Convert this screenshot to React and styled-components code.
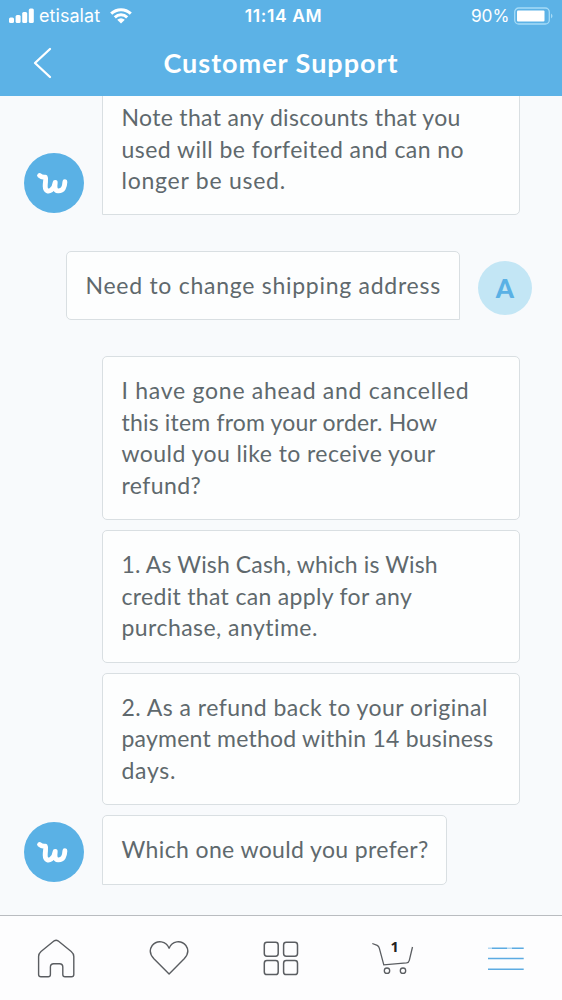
import React from "react";
import styled, { createGlobalStyle } from "styled-components";

const Global = createGlobalStyle`
  * { box-sizing: border-box; }
  body { margin: 0; background: #f8fafc; }
`;

const Screen = styled.div`
  width: 562px;
  height: 1000px;
  display: flex;
  flex-direction: column;
  overflow: hidden;
  background: #f8fafc;
  font-family: Lato, "Open Sans", sans-serif;
`;

const Header = styled.header`
  flex: none;
  height: 96px;
  background: #5cb2e6;
  color: #fff;
`;

const StatusBar = styled.div`
  height: 31px;
  display: grid;
  grid-template-columns: 1fr auto 1fr;
  align-items: center;
  padding: 1px 8px 0 9px;
  font-family: Inter, sans-serif;
  font-size: 18px;
  line-height: 30px;
`;

const Carrier = styled.div`
  display: flex;
  align-items: center;
  gap: 5px;
  letter-spacing: 0.05px;

  svg:last-child { margin-left: 5px; }
`;

const Time = styled.div`
  font-weight: 600;
  font-size: 17.5px;
  letter-spacing: 0.6px;
  padding-left: 4px;
`;

const Battery = styled.div`
  display: flex;
  align-items: center;
  justify-content: flex-end;
  gap: 4.5px;
  font-size: 17.3px;
`;

const NavBar = styled.div`
  height: 65px;
  display: grid;
  grid-template-columns: 84px 1fr 84px;
  align-items: center;
`;

const BackButton = styled.button`
  border: 0;
  padding: 0 0 2px 33px;
  background: none;
  display: flex;
`;

const Title = styled.h1`
  margin: 0 0 1px;
  font-size: 27px;
  line-height: 32px;
  font-weight: 700;
  letter-spacing: 0.98px;
  text-align: center;
  white-space: nowrap;
`;

const Chat = styled.main`
  flex: 1;
  min-height: 0;
  overflow: hidden;
  display: flex;
  flex-direction: column;
  justify-content: flex-end;
  gap: 35.6px;
  padding: 0 30px 30.5px 24px;
`;

const Group = styled.section`
  flex: none;
  display: flex;
  align-items: ${(p) => (p.$own ? "center" : "flex-end")};
  justify-content: ${(p) => (p.$own ? "flex-end" : "flex-start")};
  gap: 18px;
`;

const Bubbles = styled.div`
  display: flex;
  flex-direction: column;
  align-items: flex-start;
  gap: 10px;
`;

const Bubble = styled.div`
  width: ${(p) => p.$width}px;
  padding: 18.3px 18.5px 17.7px;
  border: 1px solid #d9dfe2;
  border-radius: 5px;
  border-bottom-left-radius: ${(p) => (p.$tail === "left" ? 0 : 5)}px;
  border-bottom-right-radius: ${(p) => (p.$tail === "right" ? 0 : 5)}px;
  background: #fdfefe;
  color: #5f696d;
  font-size: 23px;
  line-height: 31.5px;
`;

const Line = styled.span`
  display: block;
  width: max-content;
  white-space: pre;
  letter-spacing: ${(p) => p.$tracking}px;
`;

const Avatar = styled.div`
  flex: none;
  width: ${(p) => (p.$user ? 54 : 60)}px;
  height: ${(p) => (p.$user ? 54 : 60)}px;
  margin-top: ${(p) => (p.$user ? 4 : 0)}px;
  margin-bottom: ${(p) => (p.$user ? 0 : 2.6)}px;
  border-radius: 50%;
  background: ${(p) => (p.$user ? "#c3e6f5" : "#5ab1e5")};
  color: #5ab1e5;
  display: flex;
  align-items: center;
  justify-content: center;
  font-size: 26px;
  font-weight: 900;
  line-height: 54px;
`;

const TabBar = styled.nav`
  flex: none;
  height: 85px;
  border-top: 1px solid #b9bcc0;
  background: #fdfdfe;
  display: grid;
  grid-template-columns: repeat(5, 1fr);
  align-items: center;
  justify-items: center;
`;

const Tab = styled.a`
  display: flex;
  color: ${(p) => (p.$active ? "#5cabe2" : "#5a5d61")};
`;

const CartCount = styled.text`
  font: 700 14.5px "Open Sans", sans-serif;
  fill: #222;
`;

const SupportAvatar = () => (
  <Avatar>
    <svg width="60" height="60" viewBox="0 0 60 60" fill="none" stroke="#fff" strokeWidth="4.9" strokeLinecap="round" strokeLinejoin="round">
      <path d="M15.6 22.6Q17.6 24.6 21.3 24.2C22.4 25.8 21.1 29 21.2 33.2C21.3 38.4 24.6 38.8 27.2 37C30 35 30.9 31.8 31.2 29.4C30.6 34.4 30.8 37.6 34 37.9C39.4 38.3 40.6 33.6 40.9 28.8" />
    </svg>
  </Avatar>
);

const Message = ({ width, tail, lines }) => (
  <Bubble $width={width} $tail={tail}>
    {lines.map(([text, tracking]) => (
      <Line key={text} $tracking={tracking}>{text}</Line>
    ))}
  </Bubble>
);

const REFUND = [
  {
    width: 418,
    lines: [
      ["I have gone ahead and cancelled", 0.73],
      ["this item from your order. How", 0.18],
      ["would you like to receive your", 0.43],
      ["refund?", 0.4],
    ],
  },
  {
    width: 418,
    lines: [
      ["1. As Wish Cash, which is Wish", 0.13],
      ["credit that can apply for any", 0.32],
      ["purchase, anytime.", 0.45],
    ],
  },
  {
    width: 418,
    lines: [
      ["2. As a refund back to your original", 0.46],
      ["payment method within 14 business", 0.22],
      ["days.", 0.7],
    ],
  },
  { width: 345, tail: "left", lines: [["Which one would you prefer?", 0.37]] },
];

const FORFEIT = [
  ["Note that any discounts that you", 0.32],
  ["used will be forfeited and can no", 0.44],
  ["longer be used.", 0.75],
];

export default function App() {
  return (
    <>
      <Global />
      <Screen>
        <Header>
          <StatusBar>
            <Carrier>
              <svg width="25" height="16" viewBox="0 0 25 16" fill="#fff">
                <rect x="0" y="9.5" width="5" height="5.5" rx="1.5" />
                <rect x="6.6" y="7" width="5" height="8" rx="1.5" />
                <rect x="13.2" y="4" width="5" height="11" rx="1.5" />
                <rect x="19.8" y="0.5" width="5" height="14.5" rx="1.5" />
              </svg>
              <span>etisalat</span>
              <svg width="22" height="16" viewBox="0 0 22 16" fill="none" stroke="#fff" strokeWidth="3">
                <path d="M1.2 5.6C6.8.3 15.2.3 20.8 5.6M4.8 9.3C8.4 5.9 13.6 5.9 17.2 9.3" />
                <path d="M7.2 11.7Q11 8.7 14.8 11.7L11 15.6Z" fill="#fff" stroke="none" />
              </svg>
            </Carrier>
            <Time>11:14 AM</Time>
            <Battery>
              <span>90%</span>
              <svg width="40" height="18" viewBox="0 0 40 18">
                <rect x="0.7" y="1" width="34.6" height="16" rx="4" fill="none" stroke="#a5dbf7" strokeWidth="1.3" />
                <rect x="3" y="3.4" width="27.5" height="11.2" rx="1" fill="#fff" />
                <path d="M37 6.5Q40 9 37 11.5Z" fill="#a5dbf7" />
              </svg>
            </Battery>
          </StatusBar>
          <NavBar>
            <BackButton aria-label="Back">
              <svg width="20" height="32" viewBox="0 0 20 32" fill="none" stroke="#fff" strokeWidth="2.3" strokeLinecap="round" strokeLinejoin="round">
                <path d="M17 2L2 16L17 30" />
              </svg>
            </BackButton>
            <Title>Customer Support</Title>
          </NavBar>
        </Header>

        <Chat>
          <Group>
            <SupportAvatar />
            <Message width={418} tail="left" lines={FORFEIT} />
          </Group>
          <Group $own>
            <Message width={394} tail="right" lines={[["Need to change shipping address", 0.73]]} />
            <Avatar $user>A</Avatar>
          </Group>
          <Group>
            <SupportAvatar />
            <Bubbles>
              {REFUND.map((m) => (
                <Message key={m.lines[0][0]} {...m} />
              ))}
            </Bubbles>
          </Group>
        </Chat>

        <TabBar>
          <Tab aria-label="Home">
            <svg width="44" height="44" viewBox="34 936 44 44" fill="none" stroke="currentColor" strokeWidth="1.4" strokeLinejoin="round">
              <path d="M54.2 940.8Q56.2 939.6 58 940.8L71.2 951.5Q73.8 953.7 73.8 956.5V974.5Q73.8 976.8 71.5 976.8H65Q62.8 976.8 62.8 974.5V967Q62.8 963.8 59.5 963.8H53.7Q50.4 963.8 50.4 967V974.5Q50.4 976.8 48.2 976.8H41Q38.6 976.8 38.6 974.5V956.5Q38.6 953.7 41 951.5Z" />
            </svg>
          </Tab>
          <Tab aria-label="Favourites">
            <svg width="44" height="44" viewBox="146.6 936 44 44" fill="none" stroke="currentColor" strokeWidth="1.4" strokeLinejoin="round">
              <path d="M168.7 974L153.5 958.8C149.5 954.5 149 949.5 151.8 945.5C156.5 939.5 166 940.8 168.7 948.2C171.4 940.8 180.8 939.5 185.5 945.5C188.3 949.5 187.8 954.5 183.8 958.8Z" />
            </svg>
          </Tab>
          <Tab aria-label="Categories">
            <svg width="44" height="44" viewBox="259 936 44 44" fill="none" stroke="currentColor" strokeWidth="1.5">
              <rect x="264.3" y="942.3" width="13.9" height="13.9" rx="2.6" />
              <rect x="283.6" y="942.3" width="13.9" height="13.9" rx="2.6" />
              <rect x="264.3" y="960.6" width="13.9" height="13.9" rx="2.6" />
              <rect x="283.6" y="960.6" width="13.9" height="13.9" rx="2.6" />
            </svg>
          </Tab>
          <Tab aria-label="Cart">
            <svg width="46" height="44" viewBox="370 936 46 44" fill="none" stroke="currentColor" strokeWidth="1.3">
              <path d="M372.3 943.5L377.2 945.4Q378.8 946.2 379.3 948.2L383.8 964.9L406.5 962.8Q408.8 962.5 409.3 960.3L412.5 947" />
              <circle cx="387" cy="970.7" r="2.7" />
              <circle cx="403" cy="970.7" r="2.7" />
              <CartCount x="390.6" y="952" stroke="none">1</CartCount>
            </svg>
          </Tab>
          <Tab aria-label="Menu" $active>
            <svg width="44" height="44" viewBox="484 936 44 44" fill="none" stroke="currentColor" strokeWidth="1.5">
              <path d="M488 958.5H523.7M488 969.2H523.7M492 948.2H507M512 948.2H523.7" />
              <path d="M488 948.2H492M507 948.2H512" opacity="0.45" />
            </svg>
          </Tab>
        </TabBar>
      </Screen>
    </>
  );
}
